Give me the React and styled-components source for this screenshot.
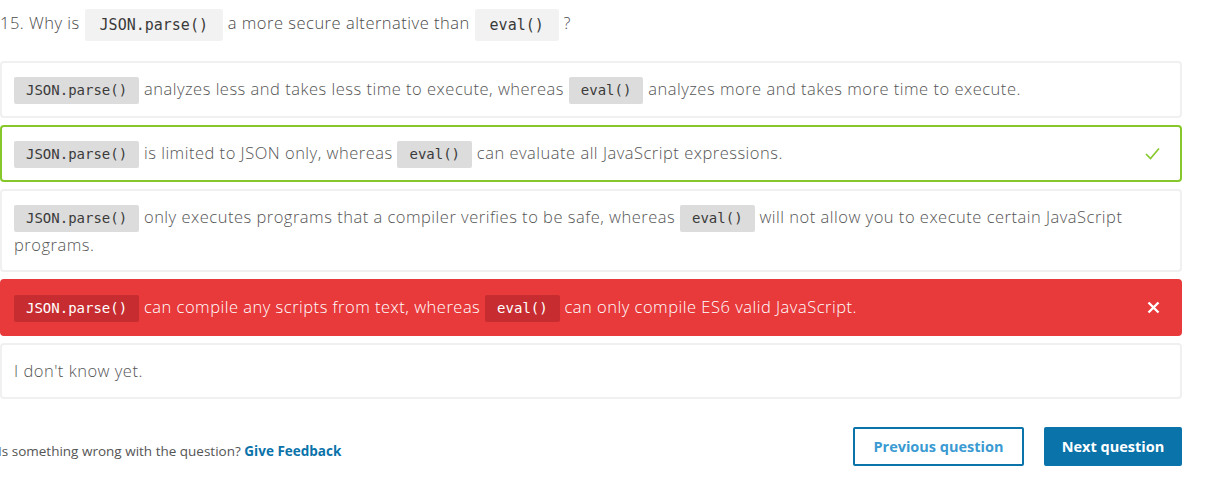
import React from "react";
import styled, { createGlobalStyle, css } from "styled-components";

const GlobalStyle = createGlobalStyle`
  body {
    margin: 0;
    background: #fff;
    font-family: "Open Sans", "Liberation Sans", sans-serif;
  }
`;

const Page = styled.div`
  width: 1182px;
  padding-top: 7px;
`;

const Question = styled.div`
  font-size: 16.5px;
  font-weight: 300;
  letter-spacing: 0.5px;
  color: #4a4a4a;
  line-height: 32px;
  margin-bottom: 20px;
`;

const Code = styled.code`
  display: inline-block;
  font-family: "DejaVu Sans Mono", "Liberation Mono", monospace;
  font-size: ${(p) => (p.$big ? "15px" : "14px")};
  letter-spacing: 0;
  line-height: ${(p) => (p.$big ? "32px" : "27px")};
  padding: ${(p) => (p.$big ? "0 15px" : "0 12px")};
  border-radius: 2px;
  vertical-align: middle;
  font-weight: 400;
  color: ${(p) => (p.$wrong ? "#fff" : "#3a3a3a")};
  background: ${(p) =>
    p.$wrong ? "#c72d30" : p.$big ? "#f2f2f2" : "#dcdcdc"};
`;

const Options = styled.div`
  display: flex;
  flex-direction: column;
  gap: 7px;
`;

const Option = styled.div`
  box-sizing: border-box;
  min-height: 56px;
  display: flex;
  align-items: center;
  gap: 20px;
  border: 2px solid #f0f0f0;
  border-radius: 4px;
  padding: 13px 20px 12px 12px;
  font-size: 16.5px;
  font-weight: 300;
  letter-spacing: 0.5px;
  line-height: 26px;
  color: #555;
  background: #fff;
  ${(p) =>
    p.$state === "correct" &&
    css`
      border-color: #86c82a;
    `}
  ${(p) =>
    p.$state === "wrong" &&
    css`
      border-color: #e8393b;
      background: #e8393b;
      color: #fff;
    `}
`;

const OptionText = styled.div`
  flex: 1;
`;

const Footer = styled.div`
  display: flex;
  align-items: center;
  justify-content: space-between;
  margin-top: 28px;
`;

const FooterText = styled.div`
  font-size: 13.5px;
  color: #555;
  margin-left: -2px;
  padding-top: 9px;
`;

const FeedbackLink = styled.a`
  color: #0a73aa;
  font-weight: 700;
  text-decoration: none;
`;

const Buttons = styled.div`
  display: flex;
  gap: 20px;
`;

const Button = styled.button`
  font-family: "Open Sans", sans-serif;
  font-size: 14.5px;
  font-weight: 700;
  height: 39px;
  padding: 0 12px;
  border-radius: 2px;
  border: 2px solid #0a73aa;
  cursor: pointer;
  background: ${(p) => (p.$primary ? "#0a73aa" : "#fff")};
  color: ${(p) => (p.$primary ? "#fff" : "#3a9ad2")};
  width: ${(p) => (p.$primary ? "138px" : "171px")};
`;

const Check = () => (
  <svg width="15" height="13" viewBox="0 0 15 13">
    <path d="M1 7 L5.5 11.5 L14 1.5" fill="none" stroke="#86c82a" strokeWidth="1.6" />
  </svg>
);

const Cross = () => (
  <svg width="13" height="13" viewBox="0 0 13 13">
    <path d="M1.5 1.5 L11.5 11.5 M11.5 1.5 L1.5 11.5" stroke="#fff" strokeWidth="2.4" />
  </svg>
);

const options = [
  {
    pre: "analyzes less and takes less time to execute, whereas",
    post: "analyzes more and takes more time to execute.",
  },
  {
    pre: "is limited to JSON only, whereas",
    post: "can evaluate all JavaScript expressions.",
    state: "correct",
  },
  {
    pre: "only executes programs that a compiler verifies to be safe, whereas",
    post: "will not allow you to execute certain JavaScript programs.",
  },
  {
    pre: "can compile any scripts from text, whereas",
    post: "can only compile ES6 valid JavaScript.",
    state: "wrong",
  },
];

export default function App() {
  return (
    <Page>
      <GlobalStyle />
      <Question>
        15. Why is <Code $big>JSON.parse()</Code> a more secure alternative than{" "}
        <Code $big>eval()</Code> ?
      </Question>

      <Options>
        {options.map((o, i) => (
          <Option key={i} $state={o.state}>
            <OptionText>
              <Code $wrong={o.state === "wrong"}>JSON.parse()</Code> {o.pre}{" "}
              <Code $wrong={o.state === "wrong"}>eval()</Code> {o.post}
            </OptionText>
            {o.state === "correct" && <Check />}
            {o.state === "wrong" && <Cross />}
          </Option>
        ))}
        <Option>
          <OptionText>I don't know yet.</OptionText>
        </Option>
      </Options>

      <Footer>
        <FooterText>
          Is something wrong with the question?{" "}
          <FeedbackLink href="#">Give Feedback</FeedbackLink>
        </FooterText>
        <Buttons>
          <Button>Previous question</Button>
          <Button $primary>Next question</Button>
        </Buttons>
      </Footer>
    </Page>
  );
}
